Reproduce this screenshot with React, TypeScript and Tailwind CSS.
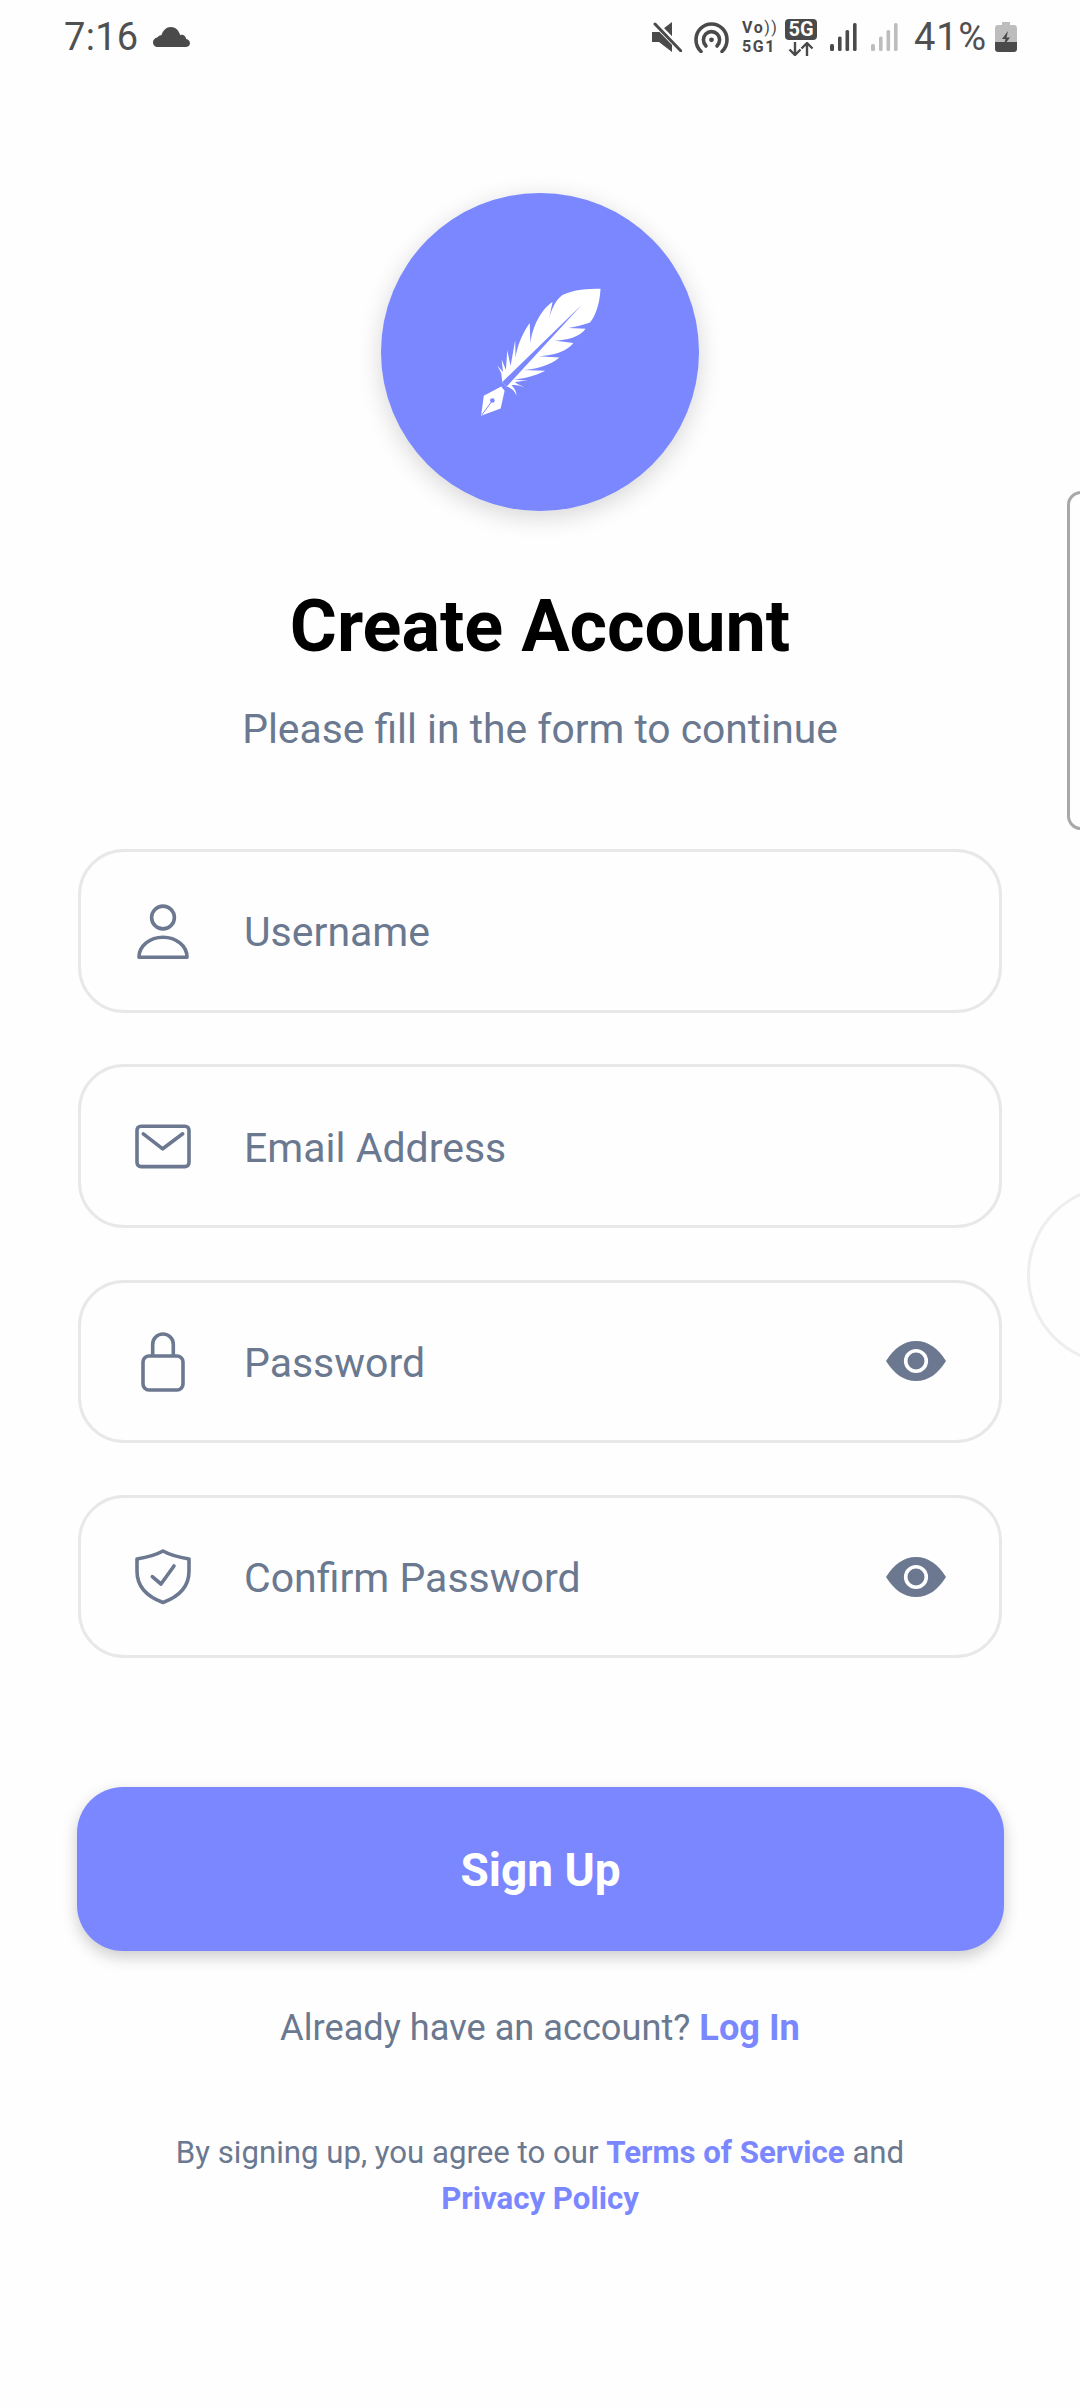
import React from 'react';

const Signal = ({ color }: { color: string }) => (
    <svg width="27" height="28" viewBox="0 0 27 28" fill={color}>
        <rect x="0" y="21" width="4" height="7" rx="1.5" />
        <rect x="8" y="13.5" width="3.6" height="14.5" rx="1.5" />
        <rect x="15.5" y="7" width="3.6" height="21" rx="1.5" />
        <rect x="23" y="0" width="3.6" height="28" rx="1.5" />
    </svg>
);

const StatusBar = () => (
    <div className="h-[74px] pl-[64px] pr-[63px] flex items-center justify-between text-[#505050] font-['Roboto',sans-serif]">
        <div className="flex items-center gap-[15px]">
            <span className="text-[38px] font-normal leading-none tracking-[0.3px]">7:16</span>
            <svg width="37" height="20" viewBox="0 0 37 20" fill="#4a4a4a">
                <path d="M5 20C2 20 0 18 0 15.2C0 12.8 1.8 10.8 4.2 10.4C5.6 8.8 7 8.2 8.4 8.2C10 3.2 13.6 0 17.6 0C22.4 0 26 3.4 27.2 8.2C28.2 7.6 29.2 7.6 30.2 8C32 8.8 33 10.4 33.2 12C35.4 12.6 37 14 37 16.2C37 18.6 35 20 32.6 20Z" />
            </svg>
        </div>
        <div className="flex items-center">
            {/* mute */}
            <svg width="30" height="30" viewBox="0 0 30 30">
                <path d="M0 10H7L20 0V30L7 20H0Z" fill="#4a4a4a" />
                <path d="M1 -1L32 31" stroke="#fefefe" strokeWidth="6" />
                <path d="M3 2L29 29" stroke="#4a4a4a" strokeWidth="3" strokeLinecap="round" />
            </svg>
            {/* hotspot */}
            <svg className="ml-[12px]" width="35" height="31" viewBox="0 0 35 31" fill="none" stroke="#4a4a4a" strokeWidth="3.6" strokeLinecap="round">
                <path d="M7 29.5C3.8 26.5 2 22.5 2 17.8C2 9 9 2 17.5 2C26 2 33 9 33 17.8C33 22.5 31.2 26.5 28 29.5" />
                <path d="M12 24C10.4 22.3 9.4 20.2 9.4 17.8C9.4 13.2 13 9.6 17.5 9.6C22 9.6 25.6 13.2 25.6 17.8C25.6 20.2 24.6 22.3 23 24" />
                <circle cx="17.5" cy="17.8" r="2.4" fill="#4a4a4a" stroke="none" />
            </svg>
            {/* volte */}
            <div className="ml-[13px] w-[32px] flex flex-col font-bold text-[16px] leading-[19px] tracking-[1.5px] text-[#4a4a4a]">
                <span className="whitespace-nowrap">Vo<span className="font-normal">))</span></span>
                <span className="whitespace-nowrap">5G1</span>
            </div>
            {/* 5G with arrows */}
            <div className="ml-[11px] w-[32px] flex flex-col items-center">
                <div className="w-[32px] h-[21px] rounded-[4px] bg-[#4a4a4a] text-[#fefefe] text-[20px] font-bold leading-[21px] text-center">5G</div>
                <svg className="mt-[2px]" width="26" height="14" viewBox="0 0 26 14" fill="none" stroke="#4a4a4a" strokeWidth="2.4">
                    <path d="M7 0V13M1.5 7.5L7 13L12.5 7.5" />
                    <path d="M19 14V1M13.5 6.5L19 1L24.5 6.5" />
                </svg>
            </div>
            <div className="ml-[13px]"><Signal color="#4a4a4a" /></div>
            <div className="ml-[14px]"><Signal color="#bdbdbd" /></div>
            <span className="ml-[16px] text-[38px] font-normal leading-none tracking-[0.8px]">41%</span>
            {/* battery */}
            <svg className="ml-[8px]" width="22" height="30" viewBox="0 0 22 30">
                <path d="M7 0H15V3H19C20.7 3 22 4.3 22 6V20H0V6C0 4.3 1.3 3 3 3H7Z" fill="#bdbdbd" />
                <path d="M0 20H22V27C22 28.7 20.7 30 19 30H3C1.3 30 0 28.7 0 27Z" fill="#4a4a4a" />
                <path d="M13 9L7 17H10.5L8.5 24L15 15.5H11.5Z" fill="#4a4a4a" />
            </svg>
        </div>
    </div>
);

const Feather = () => (
    <svg width="121" height="128" viewBox="364 324 363 387" className="overflow-visible">
        <path
            fill="#ffffff"
            d="M430 608L427 582L415 558L432 578L428 540L441 572L445 512L455 560L469 482L470 535C475 495 495 455 513 430L515 492C520 440 550 385 582 366L568 432C575 395 590 360 612 345C645 328 690 326 727 326C725 365 715 405 695 428C675 436 650 441 630 445L682 447C665 472 625 482 585 483L645 490C625 515 585 528 540 530L603 534C575 558 530 570 490 572L560 574C530 590 495 598 465 600L520 607C495 604 480 606 468 610L497 625C482 618 468 616 458 618C468 628 473 638 473 650C468 635 458 626 443 622Z"
        />
        <path fill="#7a87ff" d="M672 373L430 608L443 622L458 606Z" />
        <path fill="#ffffff" d="M427 622L437 635L425 688L366 710L374 650Z" />
        <circle cx="400" cy="664" r="7" fill="#7a87ff" />
        <path d="M400 664L368 708" stroke="#7a87ff" strokeWidth="3" />
    </svg>
);

const iconProps = {
    width: 60,
    height: 60,
    viewBox: '0 0 60 60',
    fill: 'none',
    stroke: '#6b7890',
    strokeWidth: 3.6,
    strokeLinecap: 'round' as const,
    strokeLinejoin: 'round' as const,
    className: 'overflow-visible shrink-0',
};

const UserIcon = () => (
    <svg {...iconProps}>
        <circle cx="30" cy="16.5" r="11.4" />
        <path d="M6 56.2C6 44.5 17 36.2 30 36.2C43 36.2 54 44.5 54 56.2Z" />
    </svg>
);

const MailIcon = () => (
    <svg {...iconProps}>
        <rect x="4" y="10.2" width="52" height="40.4" rx="4" />
        <path d="M10.3 17.8L29.7 32.8L49.7 17.8" />
    </svg>
);

const LockIcon = () => (
    <svg {...iconProps}>
        <path d="M19.7 24V13.3A10.3 10.3 0 0 1 40.3 13.3V24" />
        <rect x="10" y="25" width="40" height="34" rx="6" />
    </svg>
);

const ShieldIcon = () => (
    <svg {...iconProps}>
        <path d="M30 4C23 8 13 10.5 4 12V24C4 40 15 50 30 55.5C45 50 56 40 56 24V12C47 10.5 37 8 30 4Z" />
        <path d="M19.3 29.7L28 37L41 19" />
    </svg>
);

const EyeIcon = () => (
    <svg width="60" height="40" viewBox="0 0 60 40" className="shrink-0">
        <path fill="#6b7890" d="M0 20C8 7 18 0 30 0C42 0 52 7 60 20C52 33 42 40 30 40C18 40 8 33 0 20Z" />
        <circle cx="30" cy="20" r="10.3" fill="#6b7890" stroke="#ffffff" strokeWidth="3.6" />
    </svg>
);

const Field = ({ icon, label, eye }: { icon: React.ReactNode; label: string; eye?: boolean }) => (
    <div className="h-[163.5px] rounded-[46px] border-[3px] border-[#e8e8e8] pl-[52px] pr-[53px] flex items-center">
        {icon}
        <span className="ml-[51px] pt-[4px] flex-1 text-[41px] leading-none text-[#6a7890]">{label}</span>
        {eye && <EyeIcon />}
    </div>
);

export default function App() {
    return (
        <div className="relative w-[1080px] h-[2408px] overflow-hidden bg-[#fefefe] font-['Roboto',sans-serif]">
            <StatusBar />

            {/* Logo */}
            <div className="mt-[119px] mx-auto w-[318px] h-[318px] rounded-full bg-[#7a87ff] shadow-[0_6px_24px_rgba(0,0,0,0.16)] flex items-center justify-center">
                <Feather />
            </div>

            <h1 className="mt-[74px] text-center text-[72px] leading-[84px] font-bold text-black">Create Account</h1>
            <p className="mt-[36px] text-center text-[40.8px] leading-[48px] text-[#6a7890]">Please fill in the form to continue</p>

            <div className="mt-[96px] mx-[78px] flex flex-col gap-[51.83px]">
                <Field icon={<UserIcon />} label="Username" />
                <Field icon={<MailIcon />} label="Email Address" />
                <Field icon={<LockIcon />} label="Password" eye />
                <Field icon={<ShieldIcon />} label="Confirm Password" eye />
            </div>

            <button className="mt-[128.5px] ml-[77px] w-[927px] h-[164px] pt-[3px] rounded-[46px] bg-[#7a87ff] text-white text-[46px] font-bold shadow-[0_6px_16px_rgba(0,0,0,0.2)]">
                Sign Up
            </button>

            <p className="mt-[55px] text-center text-[36.2px] leading-[44px] text-[#6a7890]">
                Already have an account? <span className="font-bold text-[#7a87ff]">Log In</span>
            </p>

            <p className="mt-[80px] text-center text-[31.2px] leading-[46px] text-[#6a7890]">
                By signing up, you agree to our <span className="font-bold text-[#7a87ff]">Terms of Service</span> and
                <br />
                <span className="font-bold text-[#7a87ff]">Privacy Policy</span>
            </p>

            {/* Edge panel handle and floating bubble lying over the app */}
            <div className="absolute left-[1067px] top-[491px] w-[20px] h-[339px] rounded-l-[14px] border-[3px] border-[#a8a8a8]" />
            <div className="absolute left-[1027px] top-[1185px] w-[180px] h-[180px] rounded-full border-[3px] border-[#eeeeee]" />
        </div>
    );
}
